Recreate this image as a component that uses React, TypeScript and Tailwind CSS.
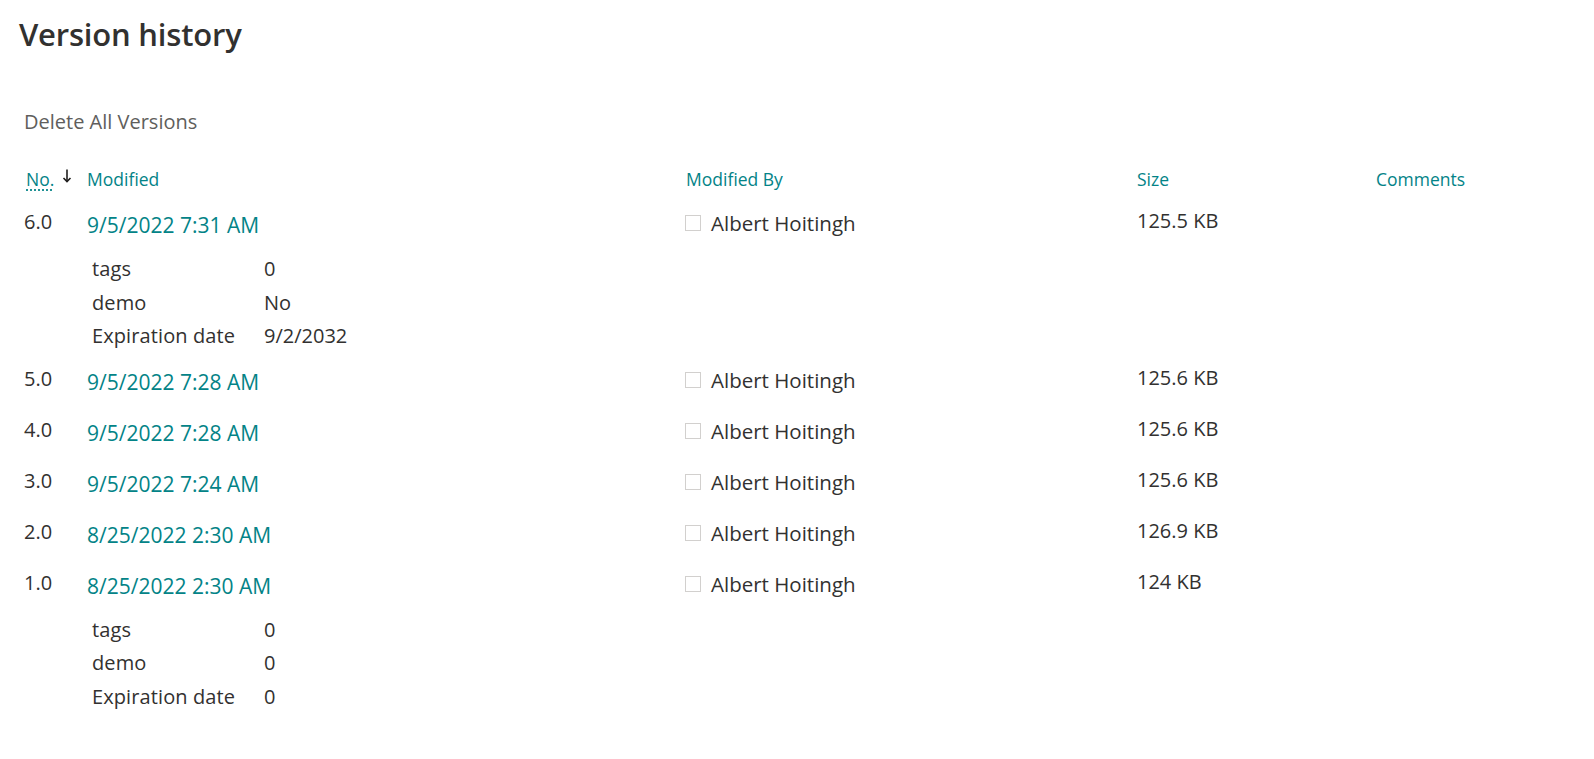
import React from "react";

type Row = {
  no: string;
  date: string;
  by: string;
  size: string;
  details?: [string, string][];
};

const rows: Row[] = [
  {
    no: "6.0",
    date: "9/5/2022 7:31 AM",
    by: "Albert Hoitingh",
    size: "125.5 KB",
    details: [
      ["tags", "0"],
      ["demo", "No"],
      ["Expiration date", "9/2/2032"],
    ],
  },
  { no: "5.0", date: "9/5/2022 7:28 AM", by: "Albert Hoitingh", size: "125.6 KB" },
  { no: "4.0", date: "9/5/2022 7:28 AM", by: "Albert Hoitingh", size: "125.6 KB" },
  { no: "3.0", date: "9/5/2022 7:24 AM", by: "Albert Hoitingh", size: "125.6 KB" },
  { no: "2.0", date: "8/25/2022 2:30 AM", by: "Albert Hoitingh", size: "126.9 KB" },
  {
    no: "1.0",
    date: "8/25/2022 2:30 AM",
    by: "Albert Hoitingh",
    size: "124 KB",
    details: [
      ["tags", "0"],
      ["demo", "0"],
      ["Expiration date", "0"],
    ],
  },
];

function SortDown() {
  return (
    <svg width="10" height="14" viewBox="0 0 10 14" fill="none" className="block">
      <path d="M5 0.5V12.5" stroke="#201f1e" strokeWidth="1.6" />
      <path d="M1.5 9L5 12.6L8.5 9" stroke="#201f1e" strokeWidth="1.6" strokeLinejoin="miter" />
    </svg>
  );
}

export default function App() {
  return (
    <div
      className="w-[1594px] h-[759px] bg-white text-[#323130] overflow-hidden"
      style={{ fontFamily: '"Segoe UI", "Open Sans", "Noto Sans", sans-serif' }}
    >
      <div className="pl-[19px] pt-[12px]">
        <h1 className="text-[31px] font-semibold leading-[44px] text-[#323130] tracking-[-0.2px]">
          Version history
        </h1>
      </div>
      <div className="pl-[24px] pt-[53px]">
        <button className="text-[20px] leading-[26px] text-[#605e5c]">Delete All Versions</button>
      </div>
      <div className="pl-[24px] pt-[32px]">
        <div className="flex items-center h-[24px] text-[17.5px] text-[#038387]">
          <div className="w-[63px] flex items-center gap-[8px] pl-[2px]">
            <span className="underline decoration-dotted underline-offset-[4px]">No.</span>
            <span className="-mt-[6px]">
              <SortDown />
            </span>
          </div>
          <div className="w-[599px]">Modified</div>
          <div className="w-[451px]">Modified By</div>
          <div className="w-[239px]">Size</div>
          <div>Comments</div>
        </div>
        <div className="pt-[21px]">
          {rows.map((r) => (
            <div key={r.no}>
              <div className={"flex items-start h-[26px] " + (r.details ? "" : "mb-[25px]")}>
                <div className="w-[63px] text-[20px] leading-[26px] -mt-[3px] text-[#323130]">{r.no}</div>
                <div className="w-[599px] text-[21px] leading-[26px] text-[#038387]">{r.date}</div>
                <div className="w-[451px] flex items-center h-[26px] -mt-[2px] -ml-[1px]">
                  <span className="w-[16px] h-[16px] border border-[#d2d0ce] mr-[10px] bg-white shrink-0" />
                  <span className="text-[20.5px] leading-[26px]">{r.by}</span>
                </div>
                <div className="w-[239px] text-[20px] leading-[26px] -mt-[4px] ml-[1px]">{r.size}</div>
                <div />
              </div>
              {r.details && (
                <div className="pl-[68px] mt-[14px] mb-[16px] text-[20px] leading-[33.5px]">
                  {r.details.map(([k, v]) => (
                    <div key={k} className="flex">
                      <div className="w-[172px] tracking-[0.1px]">{k}</div>
                      <div>{v}</div>
                    </div>
                  ))}
                </div>
              )}
            </div>
          ))}
        </div>
      </div>
    </div>
  );
}
